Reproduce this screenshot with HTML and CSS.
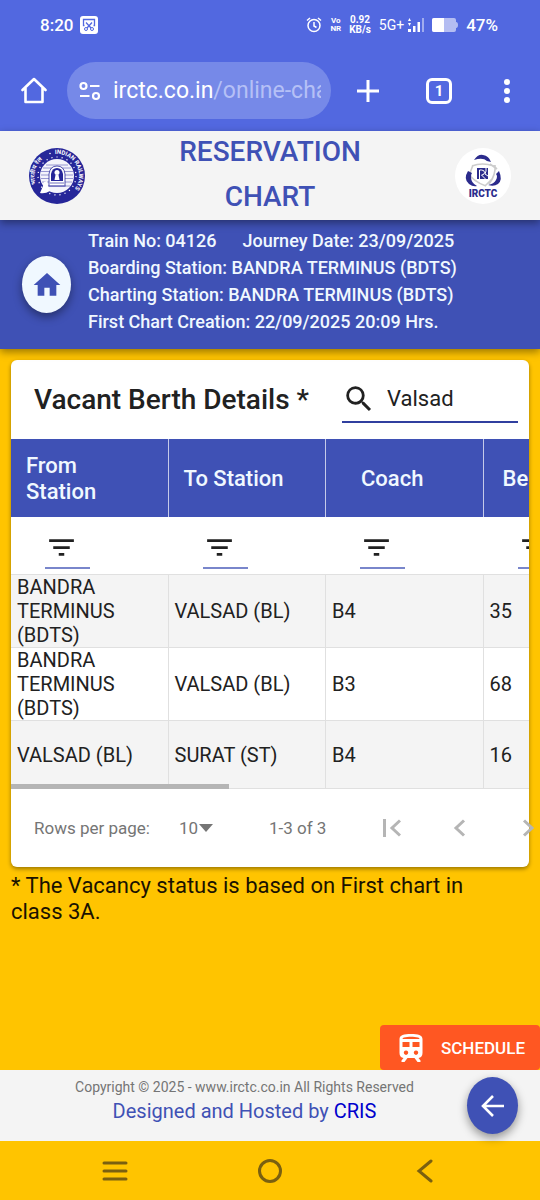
FILE: index.html
```
<!DOCTYPE html>
<html lang="en">
<head>
  <meta charset="UTF-8" />
  <meta name="viewport" content="width=device-width, initial-scale=1.0" />
  <title>Reservation Chart</title>
  <link rel="stylesheet" href="styles.css">
</head>
<body>
  <!-- Phone status bar -->
  <div class="status-bar">
    <span class="clock">8:20</span>
    <svg class="shot-icon" width="18" height="18" viewBox="0 0 18 18">
      <rect width="18" height="18" rx="3" fill="#fff"/>
      <path d="M4.5 9.5H3.5V3.5H14.5V9.5H13.5M6 6.5L11 12M12 6.5L7 12" fill="none" stroke="#5268e0" stroke-width="1.3"/>
      <circle cx="6" cy="13" r="1.5" fill="none" stroke="#5268e0"/>
      <circle cx="12" cy="13" r="1.5" fill="none" stroke="#5268e0"/>
    </svg>
    <div class="status-right">
      <svg width="16" height="18" viewBox="0 0 16 18" fill="none" stroke="#fff" stroke-width="1.5">
        <circle cx="8" cy="9.5" r="6"/>
        <path d="M8 6v4l2.5 1.5M1 4.5L4 2M15 4.5L12 2"/>
      </svg>
      <span class="tiny narrow">Vo<br>NR</span>
      <span class="tiny">0.92<br>KB/s</span>
      <span class="network">5G+</span>
      <svg class="signal" width="16" height="16" viewBox="0 0 16 16" fill="#fff">
        <path d="M0 4l1.5-3L3 4zM0 6h3l-1.5 3zM0 12h3v3H0zM5 9h2.5v6H5zM9.5 5H12v10H9.5z"/>
        <path d="M14 1h2v14h-2z" opacity=".45"/>
      </svg>
      <svg width="26" height="14" viewBox="0 0 26 14">
        <path d="M2 0h20q2 0 2 2v2q2 0 2 3t-2 3v2q0 2-2 2H2q-2 0-2-2V2Q0 0 2 0z" fill="#b4bdf2"/>
        <path d="M2 0h10v14H2q-2 0-2-2V2Q0 0 2 0z" fill="#fff"/>
      </svg>
      <span class="battery">47%</span>
    </div>
  </div>

  <!-- Browser toolbar -->
  <div class="browser-bar">
    <button class="icon-btn" aria-label="Home">
      <svg width="26" height="27" viewBox="0 0 26 27" fill="none" stroke="#fff" stroke-width="2.6" stroke-linejoin="round" stroke-linecap="round">
        <path d="M1.5 13L13 2l11.5 11M4.5 11v14h17V11"/>
      </svg>
    </button>
    <button class="url">
      <svg width="22" height="20" viewBox="0 0 22 20" fill="none" stroke="#fff" stroke-width="2.2">
        <circle cx="4.5" cy="5" r="3"/><path d="M11 5h9.5M1 15h9.5"/><circle cx="17" cy="15" r="3"/>
      </svg>
      <span class="url-text">irctc.co.in<span class="path">/online-cha</span></span>
    </button>
    <button class="icon-btn" aria-label="New tab">
      <svg width="24" height="24" viewBox="0 0 24 24" stroke="#fff" stroke-width="3"><path d="M12 1v22M1 12h22"/></svg>
    </button>
    <button class="icon-btn tabs">1</button>
    <button class="icon-btn" aria-label="Menu">
      <svg width="8" height="24" viewBox="0 0 8 24" fill="#fff"><circle cx="4" cy="3" r="3"/><circle cx="4" cy="12" r="3"/><circle cx="4" cy="21" r="3"/></svg>
    </button>
  </div>

  <header class="title-bar">
    <svg class="logo" viewBox="0 0 56 56">
      <circle cx="28" cy="28" r="28" fill="#262699"/>
      <circle cx="28" cy="28" r="19" fill="none" stroke="#fff" stroke-width="1.2" stroke-dasharray="1.2 4"/>
      <circle cx="28" cy="28" r="17" fill="#f4f4fb"/>
      <path d="M17 17h22M14 20h28M12 23.5h32M12 27h32M12 30.5h32M13 34h30M15 38h26" stroke="#8080c8" stroke-width=".8"/>
      <path d="M20 38V26q1-8 8-8t8 8v12z" fill="#fff" stroke="#262699" stroke-width=".8"/>
      <path d="M22 33V26q1-6 6-6t6 6v7z" fill="#262699"/>
      <circle cx="28" cy="24.5" r="2.5" fill="#fff"/>
      <path d="M26.5 27h3l1 5h-5z" fill="#fff"/>
      <path d="M21 35h14M19 38h18" fill="none" stroke="#7070c0" stroke-width="1.2"/>
      <path d="M11 45l3-7 1-4 3-1 1 5 2 5q-5 3-10 2z" fill="#fff"/>
      <path id="ring" d="M26 6A22 22 0 0 1 43 44" fill="none"/>
      <path id="ringLeft" d="M7 36A22 22 0 0 1 19 8" fill="none"/>
      <text class="ring-text"><textPath href="#ring">INDIAN RAILWAYS</textPath></text>
      <text class="ring-text"><textPath href="#ringLeft">भारतीय रेल</textPath></text>
      <circle cx="21" cy="5.5" r=".8" fill="#fff"/>
    </svg>
    <h1>RESERVATION CHART</h1>
    <svg class="logo" viewBox="0 0 56 56">
      <circle cx="28" cy="28" r="28" fill="#fff"/>
      <path d="M17 18q10-4 22 0l3 3M40 17q1 10-6 19M13 24q4 9 18 14M35 16l7 5M18 17l-3 8M30 38l7-7" fill="none" stroke="#ccc" stroke-width="1.6"/>
      <path d="M19 12q4-6 9-5 6 1 8 7l-4-1q-4-4-13-1z" fill="#2b2b8c"/>
      <path d="M13 23q-5 8 1 13 4 3 8 2-6-3-6-9 0-3 1-4z" fill="#2b2b8c"/>
      <path d="M44 23q4 9-1 13-4 3-10 1 6-1 8-5 2-4 0-6z" fill="#2b2b8c"/>
      <path d="M22 20h11v11H22z" fill="#2b2b8c"/>
      <path d="M24.5 31V22h2q3 0 3 2.5t-3 2.5l4 4M31 20v3l-1 3 3 2" fill="none" stroke="#fff" stroke-width="1"/>
      <text class="logo-text" x="28" y="48.5" text-anchor="middle">IRCTC</text>
    </svg>
  </header>

  <section class="train-info">
    <button class="round-btn home-btn" aria-label="Home">
      <svg width="32" height="32" viewBox="0 0 24 24" fill="#3f51b5"><path d="M10 20v-6h4v6h5v-8h3L12 3 2 12h3v8z"/></svg>
    </button>
    <div class="train-text">
      <div class="train-row"><span>Train No: 04126</span><span>Journey Date: 23/09/2025</span></div>
      <div>Boarding Station: BANDRA TERMINUS (BDTS)</div>
      <div>Charting Station: BANDRA TERMINUS (BDTS)</div>
      <div>First Chart Creation: 22/09/2025 20:09 Hrs.</div>
    </div>
  </section>

  <main>
    <div class="card">
      <div class="card-head">
        <h2>Vacant Berth Details *</h2>
        <label class="search">
          <svg width="34" height="34" viewBox="0 0 24 24" fill="#212121"><path d="M15.5 14h-.79l-.28-.27A6.47 6.47 0 0 0 16 9.5 6.5 6.5 0 1 0 9.5 16c1.61 0 3.09-.59 4.23-1.57l.27.28v.79l5 4.99L20.49 19l-4.99-5zm-6 0C7.01 14 5 11.99 5 9.5S7.01 5 9.5 5 14 7.01 14 9.5 11.99 14 9.5 14z"/></svg>
          <input type="text" value="Valsad" aria-label="Search" />
        </label>
      </div>

      <div class="table-wrap">
        <div class="table-scroll">
          <table>
            <thead>
              <tr>
                <th>From Station</th>
                <th>To Station</th>
                <th class="inset">Coach</th>
                <th class="berth">Berth</th>
              </tr>
            </thead>
            <tbody>
              <tr class="filters">
                <td><button class="filter" aria-label="Filter from station"><svg width="33" height="33" viewBox="0 0 24 24"><path d="M10 18h4v-2h-4v2zM3 6v2h18V6H3zm3 7h12v-2H6v2z"/></svg></button></td>
                <td><button class="filter" aria-label="Filter to station"><svg width="33" height="33" viewBox="0 0 24 24"><path d="M10 18h4v-2h-4v2zM3 6v2h18V6H3zm3 7h12v-2H6v2z"/></svg></button></td>
                <td><button class="filter" aria-label="Filter coach"><svg width="33" height="33" viewBox="0 0 24 24"><path d="M10 18h4v-2h-4v2zM3 6v2h18V6H3zm3 7h12v-2H6v2z"/></svg></button></td>
                <td><button class="filter" aria-label="Filter berth"><svg width="33" height="33" viewBox="0 0 24 24"><path d="M10 18h4v-2h-4v2zM3 6v2h18V6H3zm3 7h12v-2H6v2z"/></svg></button></td>
              </tr>
              <tr class="row"><td>BANDRA TERMINUS (BDTS)</td><td>VALSAD (BL)</td><td>B4</td><td>35</td></tr>
              <tr class="row"><td>BANDRA TERMINUS (BDTS)</td><td>VALSAD (BL)</td><td>B3</td><td>68</td></tr>
              <tr class="row"><td>VALSAD (BL)</td><td>SURAT (ST)</td><td>B4</td><td>16</td></tr>
            </tbody>
          </table>
        </div>
        <div class="thumb"></div>
      </div>

      <div class="pager">
        <label for="rows">Rows per page:</label>
        <span class="rows-box">
          <select id="rows"><option>10</option></select>
          <svg width="14" height="8" viewBox="0 0 14 8"><path d="M0 0h14L7 8z" fill="#757575"/></svg>
        </span>
        <span class="range">1-3 of 3</span>
        <button class="page-btn" aria-label="First page"><svg width="18" height="18" viewBox="0 0 18 18"><path d="M1.5 0v18M17 1.5L9 9l8 7.5"/></svg></button>
        <button class="page-btn" aria-label="Previous page"><svg width="18" height="18" viewBox="0 0 18 18"><path d="M13 1.5L5 9l8 7.5"/></svg></button>
        <button class="page-btn" aria-label="Next page"><svg width="18" height="18" viewBox="0 0 18 18"><path d="M5 1.5L13 9l-8 7.5"/></svg></button>
      </div>
    </div>

    <p class="note">* The Vacancy status is based on First chart in class 3A.</p>

    <button class="schedule">
      <svg width="26" height="28" viewBox="0 0 26 28" fill="#fff">
        <path fill-rule="evenodd" d="M13 0c7 0 11.5 1 11.5 5v14c0 3-1.5 4.5-4 5l2 2.5V28h-3l-3-4h-7l-3 4h-3v-1.5l2-2.5c-2.5-.5-4-2-4-5V5C1.5 1 6 0 13 0zM6 3.5c-1 .3-1.5 1-1.5 1.5h17c0-.5-.5-1.2-1.5-1.5-4-1-10-1-14 0zM4.5 8v5h7V8zM14.5 8v5h7V8zM8 16.5a2.2 2.2 0 1 0 .01 0zM18 16.5a2.2 2.2 0 1 0 .01 0z"/>
      </svg>
      SCHEDULE
    </button>
  </main>

  <footer>
    <div class="footer-text">
      <div class="copyright">Copyright © 2025 - www.irctc.co.in All Rights Reserved</div>
      <div class="designed">Designed and Hosted by <a href="#">CRIS</a></div>
    </div>
    <button class="round-btn back-btn" aria-label="Back">
      <svg width="24" height="24" viewBox="0 0 24 24" fill="none" stroke="#fff" stroke-width="2.6"><path d="M23 12H3M12 2L2 12l10 10"/></svg>
    </button>
  </footer>

  <!-- Phone navigation -->
  <nav class="phone-nav">
    <button aria-label="Recent apps"><svg width="26" height="24" viewBox="0 0 26 24"><path d="M2 4h22M2 12h22M2 20h22"/></svg></button>
    <button aria-label="Home screen"><svg width="26" height="24" viewBox="0 0 26 24"><circle cx="13" cy="12" r="10.5"/></svg></button>
    <button aria-label="Go back"><svg width="26" height="24" viewBox="0 0 26 24"><path d="M19 2L7 12l12 10"/></svg></button>
  </nav>
</body>
</html>
```
FILE: styles.css
```
* {
  box-sizing: border-box;
}
body {
  margin: 0;
  min-height: 100vh;
  display: flex;
  flex-direction: column;
  font-family: Roboto, "Liberation Sans", sans-serif;
  background: #ffc400;
  overflow-x: hidden;
}
button {
  font-family: inherit;
  border: none;
  background: none;
  padding: 0;
  cursor: pointer;
}
svg {
  display: block;
  flex-shrink: 0;
}
/* Status bar */
.status-bar {
  display: flex;
  align-items: center;
  height: 50px;
  padding: 0 42px 0 40px;
  background: #5268e0;
  color: #fff;
}
.clock,
.battery {
  font-size: 17px;
  font-weight: 500;
}
.shot-icon {
  margin-left: 7px;
}
.status-right {
  display: flex;
  align-items: center;
  gap: 8px;
  margin-left: auto;
}
.tiny {
  font-size: 10px;
  line-height: 10px;
  font-weight: 700;
  text-align: center;
}
.narrow {
  font-size: 8px;
  line-height: 8px;
}
.network {
  font-size: 14px;
}
.signal {
  margin-left: -4px;
}
/* Browser toolbar */
.browser-bar {
  display: flex;
  align-items: center;
  height: 81px;
  padding: 0 29px 0 21px;
  background: #5268e0;
}
.icon-btn {
  display: flex;
  align-items: center;
  justify-content: center;
  color: #fff;
}
.url {
  display: flex;
  align-items: center;
  gap: 12px;
  flex: 1;
  height: 57px;
  margin: 0 25px 0 20px;
  padding: 0 10px 0 12px;
  border-radius: 29px;
  background: #7689e8;
  overflow: hidden;
}
.url-text {
  flex: 1;
  overflow: hidden;
  white-space: nowrap;
  text-align: left;
  font-size: 23px;
  line-height: 30px;
  color: #fff;
}
.path {
  color: #b5c0f6;
}
.tabs {
  width: 26px;
  height: 26px;
  margin: 0 51px 0 46px;
  border: 3px solid #fff;
  border-radius: 6px;
  font-size: 15px;
  font-weight: 700;
}
/* Page header */
.title-bar {
  display: flex;
  align-items: center;
  justify-content: space-between;
  height: 89px;
  padding: 0 29px;
  background: #f4f4f4;
  position: relative;
  z-index: 2;
  box-shadow: 0 3px 8px rgba(0, 0, 0, 0.4);
}
.title-bar h1 {
  width: 50%;
  margin: 0;
  padding-bottom: 4px;
  font-size: 28px;
  line-height: 45px;
  font-weight: 500;
  text-align: center;
  color: #3f51b5;
}
.logo {
  width: 56px;
  height: 56px;
}
.ring-text {
  font-family: Roboto, "Noto Sans", sans-serif;
  font-size: 6px;
  font-weight: 700;
  fill: #fff;
}
.logo-text {
  font-size: 10px;
  font-weight: 900;
  fill: #2b2b8c;
}
.train-info {
  display: flex;
  align-items: center;
  gap: 17px;
  height: 129px;
  padding: 0 22px;
  background: #3f51b5;
  color: #f0f8ff;
  font-size: 18px;
  line-height: 27px;
  font-weight: 500;
  white-space: nowrap;
  position: relative;
  z-index: 1;
  box-shadow: 0 3px 8px rgba(0, 0, 0, 0.4);
}
.train-text {
  padding-bottom: 7px;
}
.train-row {
  display: flex;
  gap: 26px;
}
.round-btn {
  display: flex;
  align-items: center;
  justify-content: center;
  flex-shrink: 0;
  border-radius: 50%;
  box-shadow: 0 4px 10px rgba(0, 0, 0, 0.4);
}
.home-btn {
  width: 49px;
  height: 57px;
  background: #f0f8ff;
}
/* Card with the vacancy table */
main {
  flex: 1;
  display: flex;
  flex-direction: column;
  padding-top: 11px;
}
.card {
  margin: 0 11px;
  background: #fff;
  border-radius: 6px;
  box-shadow: 0 2px 4px rgba(0, 0, 0, 0.4);
  color: #212121;
}
.card-head {
  display: flex;
  align-items: center;
  justify-content: space-between;
  height: 79px;
  padding: 0 11px 0 23px;
}
.card-head h2 {
  margin: 0;
  font-size: 28px;
  font-weight: 500;
  white-space: nowrap;
}
.search {
  display: flex;
  align-items: center;
  width: 176px;
  height: 46px;
  border-bottom: 2px solid #303f9f;
}
.search input {
  width: 120px;
  margin-left: 11px;
  padding: 0;
  border: none;
  outline: none;
  background: none;
  font-family: inherit;
  font-size: 22px;
  color: #212121;
}
.table-wrap {
  position: relative;
}
.table-scroll {
  overflow-x: auto;
  scrollbar-width: none;
}
.thumb {
  position: absolute;
  left: 0;
  bottom: 0;
  width: 42%;
  height: 5px;
  background: #b5b5b5;
}
table {
  width: 630px;
  table-layout: fixed;
  border-collapse: separate;
  border-spacing: 0;
}
th {
  height: 78px;
  padding: 2px 40px 0 15px;
  background: #3f51b5;
  color: #f0f8ff;
  border-right: 1px solid #c5cae9;
  font-size: 22px;
  line-height: 26px;
  font-weight: 500;
  text-align: left;
  white-space: nowrap;
}
th:first-child {
  white-space: normal;
}
th.inset {
  padding-left: 35px;
}
th.berth {
  padding-left: 19px;
}
.filters td {
  height: 58px;
  padding: 5px 0 0 34px;
  border-bottom: 1px solid #e0e0e0;
}
.filter {
  display: flex;
  align-items: center;
  width: 45px;
  height: 42px;
  border-bottom: 2px solid #7986cb;
  fill: #212121;
}
.row td {
  height: 73px;
  padding: 0 6px;
  border-right: 1px solid #e0e0e0;
  border-bottom: 1px solid #e0e0e0;
  font-size: 20px;
  line-height: 24px;
}
.row:nth-child(even) td {
  background: #f4f4f4;
}
.row:last-child td {
  height: 68px;
}
/* Pagination */
.pager {
  display: flex;
  align-items: center;
  height: 78px;
  padding-left: 23px;
  font-size: 17px;
  color: #757575;
  white-space: nowrap;
}
.rows-box {
  display: flex;
  align-items: center;
  margin: 0 56px 0 29px;
}
.rows-box select {
  appearance: none;
  border: none;
  background: none;
  padding: 0;
  font-family: inherit;
  font-size: 17px;
  color: #757575;
}
.range {
  margin-right: 7px;
}
.page-btn {
  margin-left: 50px;
}
.page-btn path {
  fill: none;
  stroke: #b5b5b5;
  stroke-width: 3;
}
.note {
  margin: 6px 33px 0 11px;
  font-size: 22px;
  line-height: 26px;
  color: #1a1200;
}
.schedule {
  display: flex;
  align-items: center;
  gap: 17px;
  height: 45px;
  margin-top: auto;
  margin-left: auto;
  padding: 0 15px 0 18px;
  border-radius: 4px;
  background: #ff5722;
  color: #fff;
  font-size: 17px;
  font-weight: 500;
}
/* Footer */
footer {
  display: flex;
  align-items: center;
  height: 71px;
  padding-right: 22px;
  background: #f4f4f4;
}
.footer-text {
  flex: 1;
  padding: 0 0 9px 22px;
  text-align: center;
}
.copyright {
  font-size: 14px;
  line-height: 20px;
  color: #757575;
}
.designed {
  font-size: 20px;
  line-height: 28px;
  color: #3f51b5;
}
.designed a {
  color: #0000cd;
  text-decoration: none;
}
.back-btn {
  width: 51px;
  height: 57px;
  background: #3f51b5;
}
.phone-nav {
  display: flex;
  justify-content: space-between;
  align-items: center;
  height: 59px;
  padding: 0 102px;
}
.phone-nav svg {
  fill: none;
  stroke: #7a6010;
  stroke-width: 3;
  stroke-linecap: round;
}
```
